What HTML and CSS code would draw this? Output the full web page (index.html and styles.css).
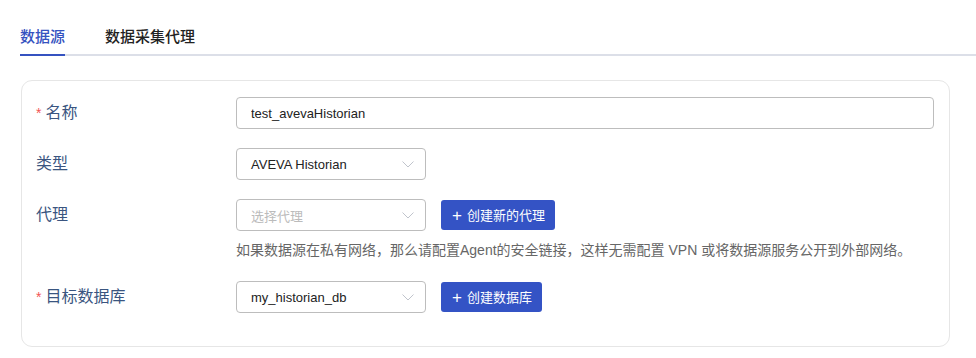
FILE: index.html
```html
<!DOCTYPE html>
<html lang="zh-CN">
<head>
    <meta charset="UTF-8">
    <title>数据源</title>
    <link rel="stylesheet" href="styles.css">
</head>
<body>
    <div class="tabs">
        <a class="tab active" href="#">数据源</a>
        <a class="tab" href="#">数据采集代理</a>
    </div>

    <div class="card">
        <div class="row">
            <label class="label"><span class="req">*</span>名称</label>
            <div class="field">
                <input class="input wide" type="text" value="test_avevaHistorian">
            </div>
        </div>

        <div class="row">
            <label class="label">类型</label>
            <div class="field">
                <div class="select">
                    <span>AVEVA Historian</span>
                    <svg class="arrow" width="12" height="7" viewBox="0 0 12 7"><path d="M0.5 0.5L6 6L11.5 0.5" fill="none" stroke="#c0c4cc" stroke-width="1"/></svg>
                </div>
            </div>
        </div>

        <div class="row">
            <label class="label">代理</label>
            <div class="field">
                <div class="line">
                    <div class="select">
                        <span class="placeholder">选择代理</span>
                        <svg class="arrow" width="12" height="7" viewBox="0 0 12 7"><path d="M0.5 0.5L6 6L11.5 0.5" fill="none" stroke="#c0c4cc" stroke-width="1"/></svg>
                    </div>
                    <button class="btn"><span class="plus">+</span>创建新的代理</button>
                </div>
                <p class="help">如果数据源在私有网络，那么请配置Agent的安全链接，这样无需配置 VPN 或将数据源服务公开到外部网络。</p>
            </div>
        </div>

        <div class="row">
            <label class="label"><span class="req">*</span>目标数据库</label>
            <div class="field">
                <div class="line">
                    <div class="select">
                        <span>my_historian_db</span>
                        <svg class="arrow" width="12" height="7" viewBox="0 0 12 7"><path d="M0.5 0.5L6 6L11.5 0.5" fill="none" stroke="#c0c4cc" stroke-width="1"/></svg>
                    </div>
                    <button class="btn"><span class="plus">+</span>创建数据库</button>
                </div>
            </div>
        </div>
    </div>
</body>
</html>
```

FILE: styles.css
```css
body {
    margin: 0;
    padding: 0 0 0 20px;
    background-color: #fff;
    color: #222;
    font-family: "Liberation Sans", "Noto Sans CJK SC", sans-serif;
}
/* Tabs on top */
.tabs {
    display: flex;
    gap: 40px;
    padding-top: 26px;
    border-bottom: 2px solid #dcdfe8;
}
.tab {
    display: block;
    padding-bottom: 6px;
    margin-bottom: -2px;
    font-size: 15px;
    line-height: 22px;
    font-weight: 500;
    color: #222;
    text-decoration: none;
    border-bottom: 2px solid transparent;
}
.tab.active {
    color: #3552c0;
    border-bottom-color: #3552c0;
}
/* Form card */
.card {
    width: 898px;
    margin-top: 24px;
    margin-left: 1px;
    padding: 16px 15px 33px 14px;
    border: 1px solid #e6e6e6;
    border-radius: 11px;
}
.row {
    display: flex;
    margin-bottom: 19px;
}
.row:last-child {
    margin-bottom: 0;
}
.label {
    width: 200px;
    flex-shrink: 0;
    font-size: 16px;
    line-height: 32px;
    color: #3a5580;
}
.req {
    color: #f25454;
    font-size: 14px;
    margin-right: 4px;
}
.field {
    flex: 1;
}
.line {
    display: flex;
    align-items: center;
    gap: 15px;
}
.input,
.select {
    box-sizing: border-box;
    height: 32px;
    border: 1px solid #bdbdbd;
    border-radius: 4px;
    font-family: inherit;
    font-size: 13px;
    color: #222;
}
.input {
    padding: 0 14px;
    outline: none;
}
.input.wide {
    width: 698px;
}
.select {
    width: 190px;
    display: flex;
    align-items: center;
    justify-content: space-between;
    padding: 0 11px 0 14px;
}
.placeholder {
    color: #bbbbbb;
}
.arrow {
    display: block;
}
.btn {
    height: 30px;
    padding: 0 10px 0 11px;
    border: none;
    border-radius: 3px;
    background-color: #3453c5;
    color: #fff;
    font-family: inherit;
    font-size: 13px;
}
.plus {
    font-size: 17px;
    font-weight: 300;
    margin-right: 5px;
    position: relative;
    top: 1px;
}
.help {
    margin: 9px 0 2px;
    font-size: 14px;
    line-height: 20px;
    color: #666;
}
```
